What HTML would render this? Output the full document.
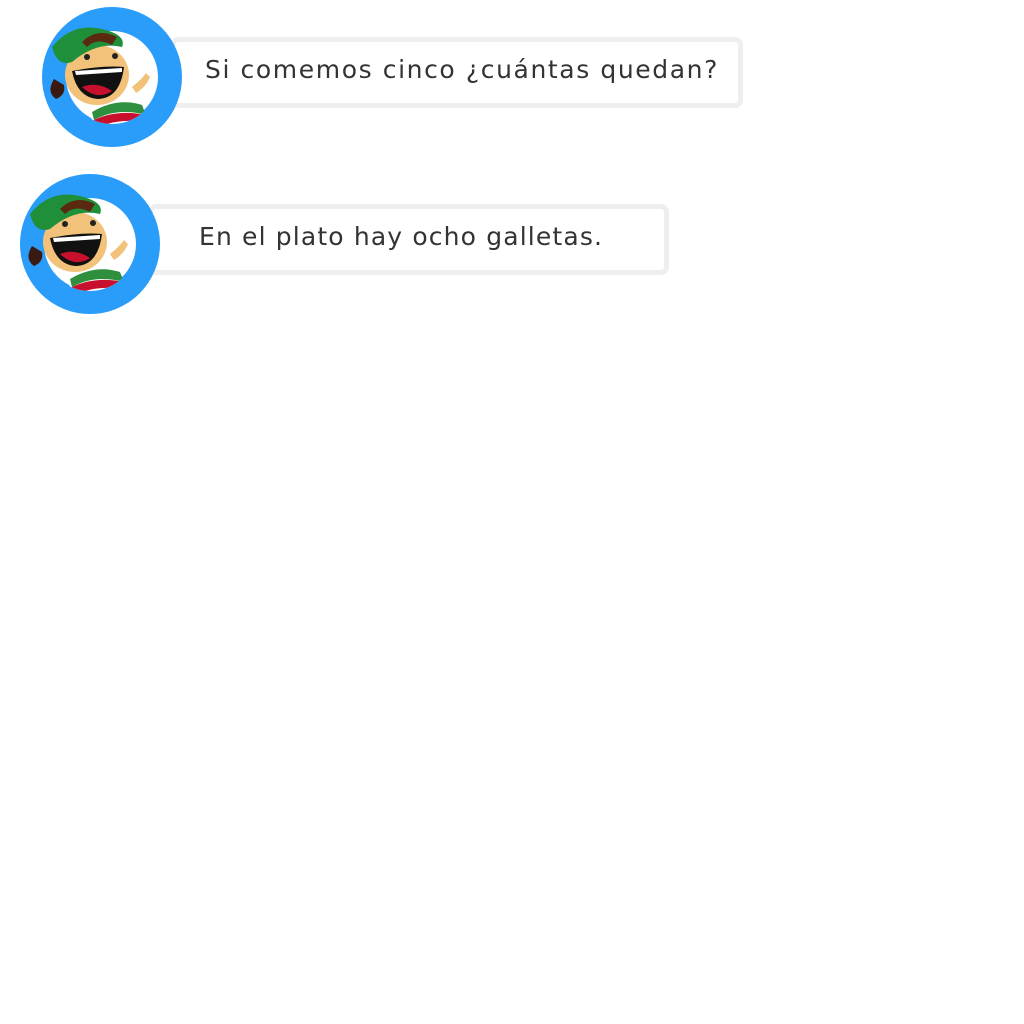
<!DOCTYPE html>
<html><head><meta charset="utf-8"><style>
body{margin:0;width:1024px;height:1024px;background:#fff;position:relative;overflow:hidden;font-family:"DejaVu Sans","Liberation Sans",sans-serif;}
.b{position:absolute;border:5px solid #eeeeee;border-radius:8px;background:#fff;box-sizing:border-box;}
.t{position:absolute;color:#333;font-size:25px;white-space:nowrap;}
.av{position:absolute;width:140px;height:140px;}
</style></head><body>
<div class="b" style="left:170px;top:37px;width:573px;height:71px"></div>
<div class="t" style="left:205px;top:55px;letter-spacing:1.6px">Si comemos cinco ¿cuántas quedan?</div>
<div class="b" style="left:148px;top:204px;width:521px;height:71px"></div>
<div class="t" style="left:199px;top:222px;letter-spacing:1.15px">En el plato hay ocho galletas.</div>

<svg class="av" style="left:42px;top:7px" viewBox="0 0 140 140">
<defs><clipPath id="c1"><circle cx="70" cy="70" r="47"/></clipPath></defs>
<circle cx="70" cy="70" r="58" fill="none" stroke="#2a9dfb" stroke-width="24"/>
<g clip-path="url(#c1)">
<path d="M50 108 Q70 88 100 95 L110 140 L45 140Z" fill="#fff"/>
<path d="M50 105 Q75 90 100 98 L104 108 Q75 100 52 113Z" fill="#2e8f3e"/>
<path d="M52 113 Q75 102 104 108 L106 116 Q78 110 55 121Z" fill="#c8102e"/>
</g>
<ellipse cx="55" cy="68" rx="32" ry="30" fill="#f2c27a"/>
<path d="M10 40 Q30 15 60 22 Q85 28 80 40 Q55 34 30 55 Q15 60 10 40Z" fill="#1f8f3a"/>
<path d="M40 35 Q55 20 75 30 L70 38 Q55 30 45 40Z" fill="#5a2a10"/>
<path d="M12 72 Q4 85 14 92 Q24 88 22 78Z" fill="#3a1a10"/>
<circle cx="45" cy="50" r="3" fill="#222"/><circle cx="73" cy="49" r="3" fill="#222"/>
<path d="M30 64 Q62 58 82 60 Q78 92 55 92 Q35 90 30 64Z" fill="#111"/>
<path d="M40 80 Q55 74 70 84 Q55 94 40 80Z" fill="#c8102e"/>
<path d="M33 64 L80 61 L80 65 L34 68Z" fill="#fff"/>
<path d="M90 80 Q100 72 104 66 L108 70 Q104 80 94 86Z" fill="#f2c27a"/>
</svg>
<svg class="av" style="left:20px;top:174px" viewBox="0 0 140 140">
<defs><clipPath id="c2"><circle cx="70" cy="70" r="47"/></clipPath></defs>
<circle cx="70" cy="70" r="58" fill="none" stroke="#2a9dfb" stroke-width="24"/>
<g clip-path="url(#c2)">
<path d="M50 108 Q70 88 100 95 L110 140 L45 140Z" fill="#fff"/>
<path d="M50 105 Q75 90 100 98 L104 108 Q75 100 52 113Z" fill="#2e8f3e"/>
<path d="M52 113 Q75 102 104 108 L106 116 Q78 110 55 121Z" fill="#c8102e"/>
</g>
<ellipse cx="55" cy="68" rx="32" ry="30" fill="#f2c27a"/>
<path d="M10 40 Q30 15 60 22 Q85 28 80 40 Q55 34 30 55 Q15 60 10 40Z" fill="#1f8f3a"/>
<path d="M40 35 Q55 20 75 30 L70 38 Q55 30 45 40Z" fill="#5a2a10"/>
<path d="M12 72 Q4 85 14 92 Q24 88 22 78Z" fill="#3a1a10"/>
<circle cx="45" cy="50" r="3" fill="#222"/><circle cx="73" cy="49" r="3" fill="#222"/>
<path d="M30 64 Q62 58 82 60 Q78 92 55 92 Q35 90 30 64Z" fill="#111"/>
<path d="M40 80 Q55 74 70 84 Q55 94 40 80Z" fill="#c8102e"/>
<path d="M33 64 L80 61 L80 65 L34 68Z" fill="#fff"/>
<path d="M90 80 Q100 72 104 66 L108 70 Q104 80 94 86Z" fill="#f2c27a"/>
</svg>
</body></html>
